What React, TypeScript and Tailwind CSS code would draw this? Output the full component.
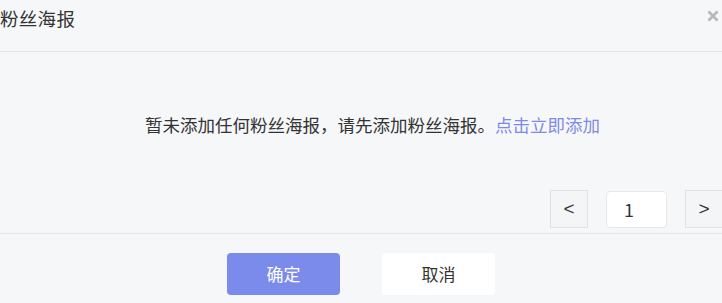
import React from "react";

export default function App() {
  return (
    <div
      className="w-[722px] h-[303px] bg-[#f6f7f9] text-[#333] overflow-hidden flex flex-col"
      style={{ fontFamily: '"Noto Sans CJK SC", "Noto Sans", sans-serif' }}
    >
      <div className="h-[52px] shrink-0 border-b border-[#e3e4e6] flex items-start justify-between pt-[4px] pr-[2px]">
        <span className="text-[18.5px] leading-[28px] tracking-[0.3px]">粉丝海报</span>
        <svg width="12" height="12" viewBox="0 0 12 12" className="mt-[6px] mr-[1px]">
          <path d="M1.5 1.5 L10.5 10.5 M10.5 1.5 L1.5 10.5" stroke="#b8b8b8" strokeWidth="2.6" strokeLinecap="butt" />
        </svg>
      </div>
      <div className="h-[182px] shrink-0 border-b border-[#e3e4e6] flex flex-col">
        <div className="pt-[60px] pl-[145px] text-[17.5px] leading-[26px] whitespace-nowrap">
          暂未添加任何粉丝海报，请先添加粉丝海报。<span className="text-[#7f8ae6] cursor-pointer">点击立即添加</span>
        </div>
        <div className="mt-auto mb-[5px] flex justify-end items-center gap-[18px] -mr-[1px]">
          <button
            className="w-[38px] h-[38px] border border-[#e2e2e2] bg-[#f4f5f6] text-[19px] flex items-center justify-center text-[#333]"
            style={{ fontFamily: '"Liberation Sans", sans-serif' }}
          >
            &lt;
          </button>
          <div className="w-[61px] h-[37px] rounded-[4px] border border-[#e8e8e8] bg-white text-[18px] flex items-center pl-[17px]">
            1
          </div>
          <button
            className="w-[38px] h-[38px] border border-[#e2e2e2] bg-[#f4f5f6] text-[19px] flex items-center justify-center text-[#333]"
            style={{ fontFamily: '"Liberation Sans", sans-serif' }}
          >
            &gt;
          </button>
        </div>
      </div>
      <div className="flex justify-center gap-[42px] pt-[19px]">
        <button className="w-[113px] h-[42px] rounded-[4px] bg-[#7b8bec] text-white text-[17px]">确定</button>
        <button className="w-[113px] h-[42px] rounded-[4px] bg-white text-[#333] text-[17px]">取消</button>
      </div>
    </div>
  );
}
